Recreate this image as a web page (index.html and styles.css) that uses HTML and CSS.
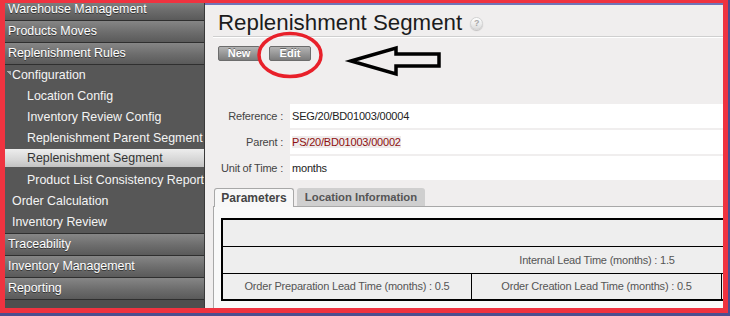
FILE: index.html
```html
<!DOCTYPE html>
<html lang="en">
<head>
    <meta charset="UTF-8">
    <title>Replenishment Segment</title>
    <link rel="stylesheet" href="styles.css">
</head>
<body>
<div class="frame">
    <div class="sidebar">
        <div class="menu-top">Warehouse Management</div>
        <div class="menu-top">Products Moves</div>
        <div class="menu-top">Replenishment Rules</div>
        <div class="menu-sub">
            <div class="sub-item lvl1"><span class="caret"></span>Configuration</div>
            <div class="sub-item lvl2">Location Config</div>
            <div class="sub-item lvl2">Inventory Review Config</div>
            <div class="sub-item lvl2">Replenishment Parent Segment</div>
            <div class="sub-item lvl2 selected">Replenishment Segment</div>
            <div class="sub-item lvl2">Product List Consistency Report</div>
            <div class="sub-item lvl1">Order Calculation</div>
            <div class="sub-item lvl1">Inventory Review</div>
        </div>
        <div class="menu-top">Traceability</div>
        <div class="menu-top">Inventory Management</div>
        <div class="menu-top">Reporting</div>
    </div>

    <div class="main">
        <div class="title-bar">
            <h1>Replenishment Segment</h1>
            <span class="help">?</span>
        </div>
        <div class="toolbar">
            <button class="btn">New</button>
            <button class="btn">Edit</button>
        </div>

        <div class="form">
            <div class="label">Reference :</div>
            <div class="value">SEG/20/BD01003/00004</div>
            <div class="label">Parent :</div>
            <div class="value"><span class="link">PS/20/BD01003/00002</span></div>
            <div class="label">Unit of Time :</div>
            <div class="value">months</div>
        </div>

        <div class="tabs">
            <div class="tab active">Parameters</div>
            <div class="tab other">Location Information</div>
        </div>
        <div class="panel">
            <div class="grid">
                <div class="cell wide"></div>
                <div class="cell wide line">Internal Lead Time (months) : 1.5</div>
                <div class="cell line">Order Preparation Lead Time (months) : 0.5</div>
                <div class="cell line sep">Order Creation Lead Time (months) : 0.5</div>
                <div class="cell line sep"></div>
            </div>
        </div>
    </div>
</div>

<!-- annotations drawn over the screenshot -->
<svg class="annot" width="730" height="316" viewBox="0 0 730 316">
    <ellipse cx="290" cy="55" rx="31" ry="21.5" fill="none" stroke="#e8202a" stroke-width="3.5"/>
    <polygon points="351,61 396,48 396,54 439,54 439,66 396,66 396,74" fill="none" stroke="#000" stroke-width="3.5"/>
</svg>
</body>
</html>
```

FILE: styles.css
```css
* {
    margin: 0;
    padding: 0;
    box-sizing: border-box;
}

body {
    width: 730px;
    height: 316px;
    background-color: #4c4f90;
    font-family: "Liberation Sans", Arial, sans-serif;
    position: relative;
    overflow: hidden;
}

.frame {
    width: 728px;
    height: 313px;
    border-style: solid;
    border-color: #ef3340;
    border-width: 3px 5px 5px 5px;
    display: flex;
    overflow: hidden;
    background-color: #f0eeee;
}

/* left menu */
.sidebar {
    width: 200px;
    flex-shrink: 0;
    margin-top: -4px;
    height: 309px;
    background-color: #4e4e4e;
    border-right: 1px solid #3a3a3a;
    font-size: 12.4px;
    white-space: nowrap;
    overflow: hidden;
}

.menu-top {
    height: 22px;
    line-height: 21px;
    padding-left: 3px;
    color: #fff;
    text-shadow: 0 1px 0 #333;
    background: linear-gradient(to bottom, #868686 0, #6c6c6c 55%, #5a5a5a 100%);
    border-bottom: 1px solid #2f2f2f;
}

.menu-sub {
    background-color: #575757;
    border-bottom: 1px solid #2f2f2f;
}

.sub-item {
    height: 21px;
    line-height: 21px;
    color: #f4f4f4;
}

.lvl1 {
    padding-left: 7px;
}

.lvl2 {
    padding-left: 22px;
}

.caret {
    display: inline-block;
    width: 5px;
    height: 4px;
    margin-left: -6px;
    margin-right: 1px;
    vertical-align: 4px;
    background: linear-gradient(to bottom left, #aaa 50%, transparent 50%);
}

.sub-item.selected {
    height: 18px;
    line-height: 18px;
    margin-bottom: 3px;
    color: #333;
    background: linear-gradient(to bottom, #ededed 0, #d6d6d6 60%, #c2c2c2 100%);
}

/* content */
.main {
    flex: 1;
    min-width: 0;
    border-top: 2px solid #7075b8;
    padding-left: 8px;
    font-size: 11px;
    letter-spacing: -0.2px;
    white-space: nowrap;
}

.title-bar {
    display: flex;
    align-items: center;
    height: 27px;
    margin-top: 5px;
    padding-left: 5px;
    border-bottom: 1px solid #cfcfcf;
    box-shadow: 0 1px 0 #fff;
    letter-spacing: 0;
}

.title-bar h1 {
    font-size: 22.3px;
    font-weight: normal;
    line-height: 26px;
    color: #1c1c1c;
}

.help {
    width: 13px;
    height: 13px;
    margin-left: 8px;
    border-radius: 50%;
    border: 1px solid #d2d2d2;
    background: linear-gradient(to bottom, #fff, #dcdcdc);
    box-shadow: 0 1px 1px rgba(0, 0, 0, 0.2);
    color: #a8a8a8;
    font-size: 9px;
    font-weight: bold;
    line-height: 11px;
    text-align: center;
}

.toolbar {
    display: flex;
    gap: 9px;
    margin-top: 9px;
    padding-left: 5px;
}

.btn {
    width: 42px;
    height: 15px;
    border: 1px solid #6c6c6c;
    border-radius: 2px;
    background: linear-gradient(to bottom, #b4b4b4, #7c7c7c);
    color: #fff;
    font-family: "Liberation Sans", Arial, sans-serif;
    font-size: 11px;
    font-weight: bold;
    line-height: 13px;
    text-shadow: 0 -1px 0 #666;
}

.form {
    display: grid;
    grid-template-columns: 77px 1fr;
    row-gap: 2px;
    margin-top: 43px;
}

.label {
    height: 24px;
    line-height: 24px;
    padding-right: 7px;
    text-align: right;
    color: #444;
}

.value {
    height: 24px;
    line-height: 24px;
    padding-left: 2px;
    background-color: #fff;
    color: #222;
}

.link {
    color: #8e1010;
    background-color: #efebeb;
}

.tabs {
    display: flex;
    align-items: flex-start;
    gap: 3px;
    height: 18px;
    margin-top: 8px;
    padding-left: 1px;
}

.tab {
    height: 18px;
    line-height: 18px;
    border-radius: 3px 3px 0 0;
    background-color: #cfcfcf;
    color: #555;
    font-weight: bold;
    text-align: center;
    letter-spacing: 0;
}

.tab.other {
    width: 128px;
    font-size: 11.3px;
}

.tab.active {
    position: relative;
    z-index: 1;
    width: 80px;
    height: 19px;
    border: 1px solid #a8a8a8;
    border-bottom: none;
    background-color: #f8f8f8;
    color: #444;
    font-size: 12px;
}

.panel {
    height: 200px;
    padding: 11px 0 0 7px;
    border: 1px solid #a8a8a8;
    border-right: none;
    background-color: #f9f9f9;
}

.grid {
    display: grid;
    grid-template-columns: 248px 250px 250px;
    width: max-content;
    border: 2px solid #000;
}

.cell {
    height: 26px;
    line-height: 26px;
    text-align: center;
    background-color: #eee;
    color: #555;
}

.cell.wide {
    grid-column: 1 / 4;
}

.cell.line {
    border-top: 1px solid #000;
    height: 27px;
    line-height: 26px;
}

.cell.sep {
    border-left: 1px solid #000;
}

.grid .cell:nth-child(n+3) {
    height: 26px;
    line-height: 25px;
}

.annot {
    position: absolute;
    top: 0;
    left: 0;
    pointer-events: none;
}
```
